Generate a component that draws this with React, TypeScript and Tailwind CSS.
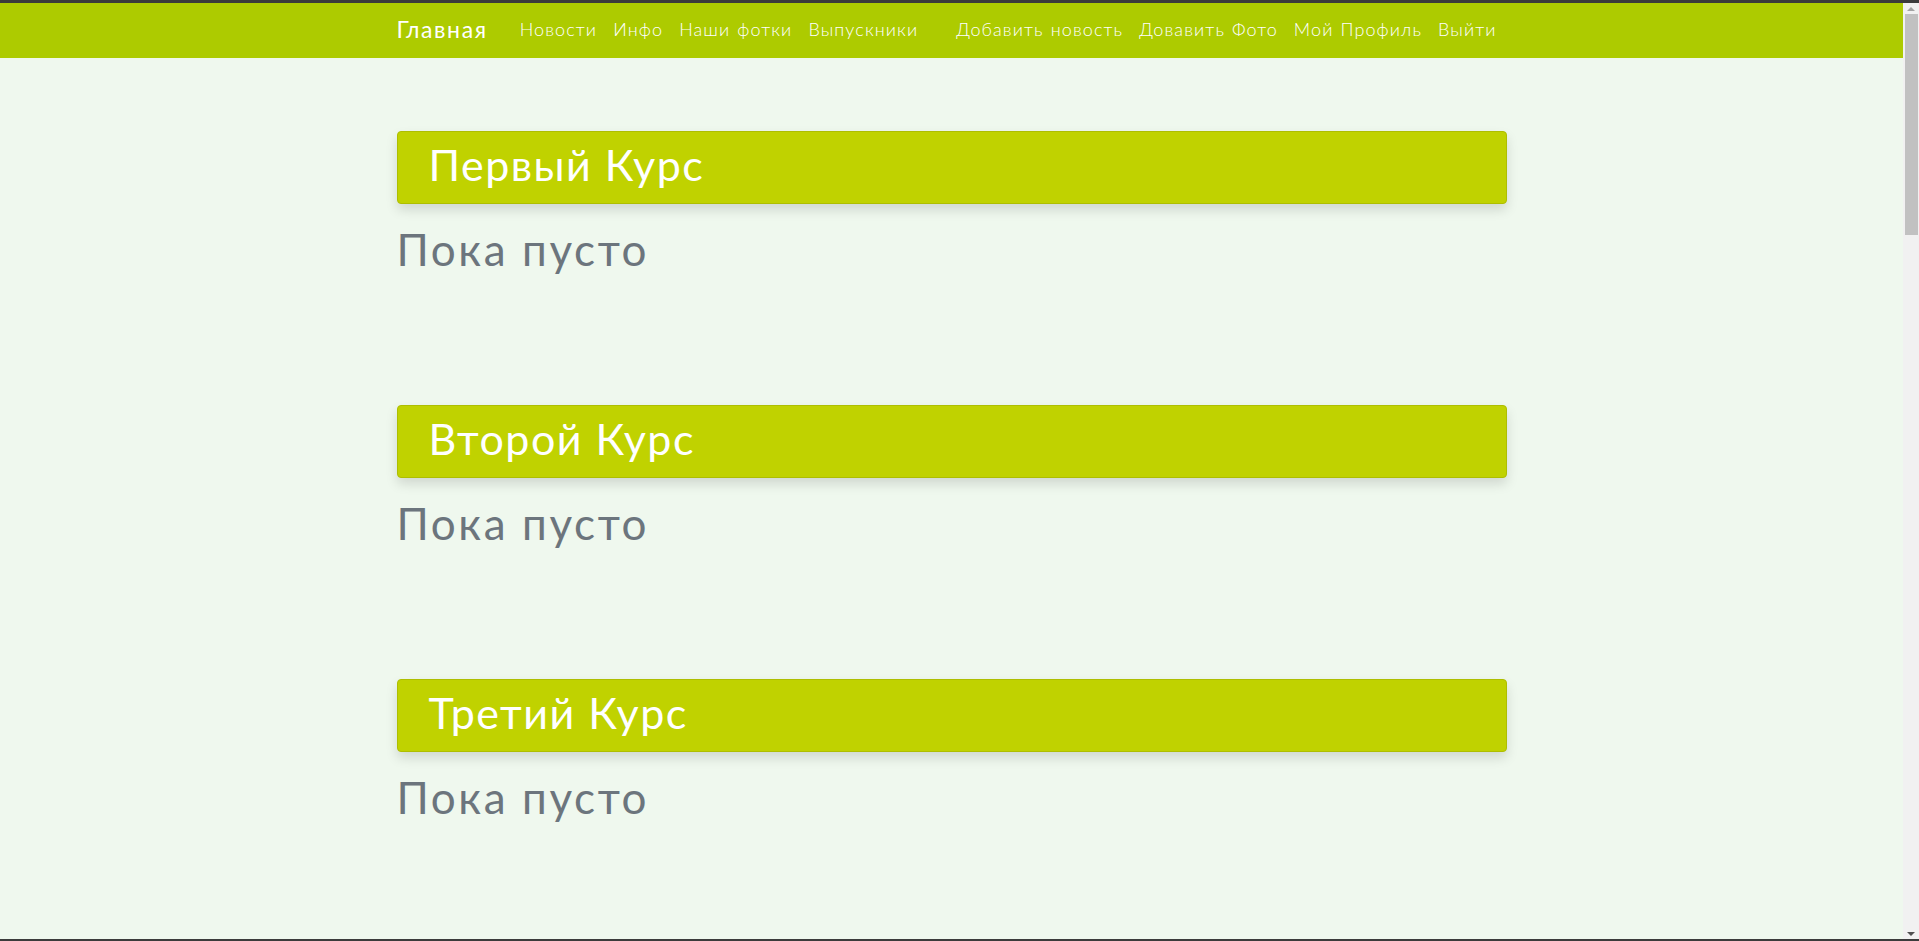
const leftLinks = ["Новости", "Инфо", "Наши фотки", "Выпускники"];
const rightLinks = ["Добавить новость", "Довавить Фото", "Мой Профиль", "Выйти"];
const courses = ["Первый Курс", "Второй Курс", "Третий Курс"];

const App = () => {
  return (
    <div className="h-[941px] w-full flex border-t-[3px] border-b-2 border-[#3b3b3b] overflow-hidden font-['Lato','Noto_Sans',sans-serif]">
      <div className="flex-1 flex flex-col bg-[#eff8ee] overflow-hidden">
        {/* Navbar */}
        <nav className="h-[55px] shrink-0 bg-[#adcb00]">
          <div className="w-[1140px] h-full mx-auto px-[15px] flex items-center whitespace-nowrap">
            <a className="shrink-0 text-[23px] text-white font-normal tracking-[1.6px] mr-[32px] pb-[3px]">Главная</a>
            <ul className="shrink-0 flex items-center gap-[16px]">
              {leftLinks.map((l) => (
                <li key={l} className="shrink-0 text-[18px] text-white font-light tracking-[1.1px] [word-spacing:1px] pb-[3px]">
                  {l}
                </li>
              ))}
            </ul>
            <ul className="shrink-0 flex items-center gap-[16px] ml-[38px]">
              {rightLinks.map((l) => (
                <li key={l} className="shrink-0 text-[18px] text-white font-light tracking-[1.1px] [word-spacing:1px] pb-[3px]">
                  {l}
                </li>
              ))}
            </ul>
          </div>
        </nav>

        {/* Courses */}
        <main className="w-[1140px] mx-auto px-[15px] pt-[73px] flex flex-col">
          {courses.map((c) => (
            <section key={c} className="h-[274px] flex flex-col">
              <div className="h-[73px] flex items-center px-[31px] bg-[#c0d200] border border-[#aebe00] rounded-[4px] shadow-[0_6px_12px_rgba(0,0,0,0.13)]">
                <h1 className="text-[43px] leading-[48px] text-white tracking-[1.5px] pb-[6px]">{c}</h1>
              </div>
              <p className="mt-[21px] text-[44px] leading-[48px] text-[#6c757d] tracking-[2.6px]">
                Пока пусто
              </p>
            </section>
          ))}
        </main>
      </div>

      {/* Scrollbar */}
      <div className="w-[16px] shrink-0 bg-[#f1f1f1] flex flex-col items-center">
        <div className="h-[11px] flex items-center justify-center">
          <div className="w-0 h-0 border-l-[4px] border-r-[4px] border-b-[4px] border-l-transparent border-r-transparent border-b-[#a3a3a3]" />
        </div>
        <div className="w-[13px] h-[221px] bg-[#c1c1c1]" />
        <div className="flex-1" />
        <div className="h-[11px] flex items-center justify-center">
          <div className="w-0 h-0 border-l-[4px] border-r-[4px] border-t-[4px] border-l-transparent border-r-transparent border-t-[#505050]" />
        </div>
      </div>
    </div>
  );
};

export default App;
